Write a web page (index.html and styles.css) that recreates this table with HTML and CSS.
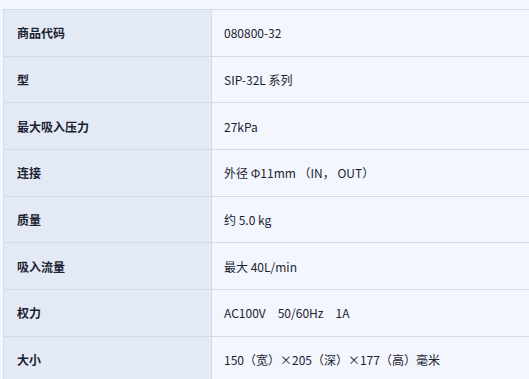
FILE: index.html
```html
<!DOCTYPE html>
<html lang="zh">
<head>
<meta charset="utf-8">
<link rel="stylesheet" href="styles.css">
</head>
<body>
<div class="page">
  <div class="spec">
    <div class="row"><div class="key">商品代码</div><div class="val">080800-32</div></div>
    <div class="row"><div class="key">型</div><div class="val">SIP-32L 系列</div></div>
    <div class="row"><div class="key">最大吸入压力</div><div class="val">27kPa</div></div>
    <div class="row"><div class="key">连接</div><div class="val">外径 Φ11mm （IN， OUT）</div></div>
    <div class="row"><div class="key">质量</div><div class="val">约 5.0 kg</div></div>
    <div class="row"><div class="key">吸入流量</div><div class="val">最大 40L/min</div></div>
    <div class="row"><div class="key">权力</div><div class="val">AC100V　50/60Hz　1A</div></div>
    <div class="row"><div class="key">大小</div><div class="val">150（宽）×205（深）×177（高）毫米</div></div>
  </div>
</div>
</body>
</html>
```

FILE: styles.css
```css
html, body {
  margin: 0;
  padding: 0;
  background: #f3f7fd;
  overflow: hidden;
}
.page {
  width: 529px;
  height: 379px;
  overflow: hidden;
  padding: 9px 0 0 3px;
  box-sizing: border-box;
  font-family: "Noto Sans CJK SC", "Noto Sans", sans-serif;
  font-size: 12px;
  color: #1b2232;
}
.spec {
  width: 640px;
  border-left: 1px solid #cfdbe9;
}
.row {
  display: grid;
  grid-template-columns: 208px 1fr;
  height: 46.667px;
  box-sizing: border-box;
  border-top: 1px solid #cfdbe9;
}
.key {
  background: #e3eaf5;
  border-right: 1px solid #cfdbe9;
  font-weight: 700;
  display: flex;
  align-items: center;
  padding-left: 13px;
}
.val {
  background: #f3f7fd;
  display: flex;
  align-items: center;
  padding-left: 12px;
  white-space: pre;
}
```
